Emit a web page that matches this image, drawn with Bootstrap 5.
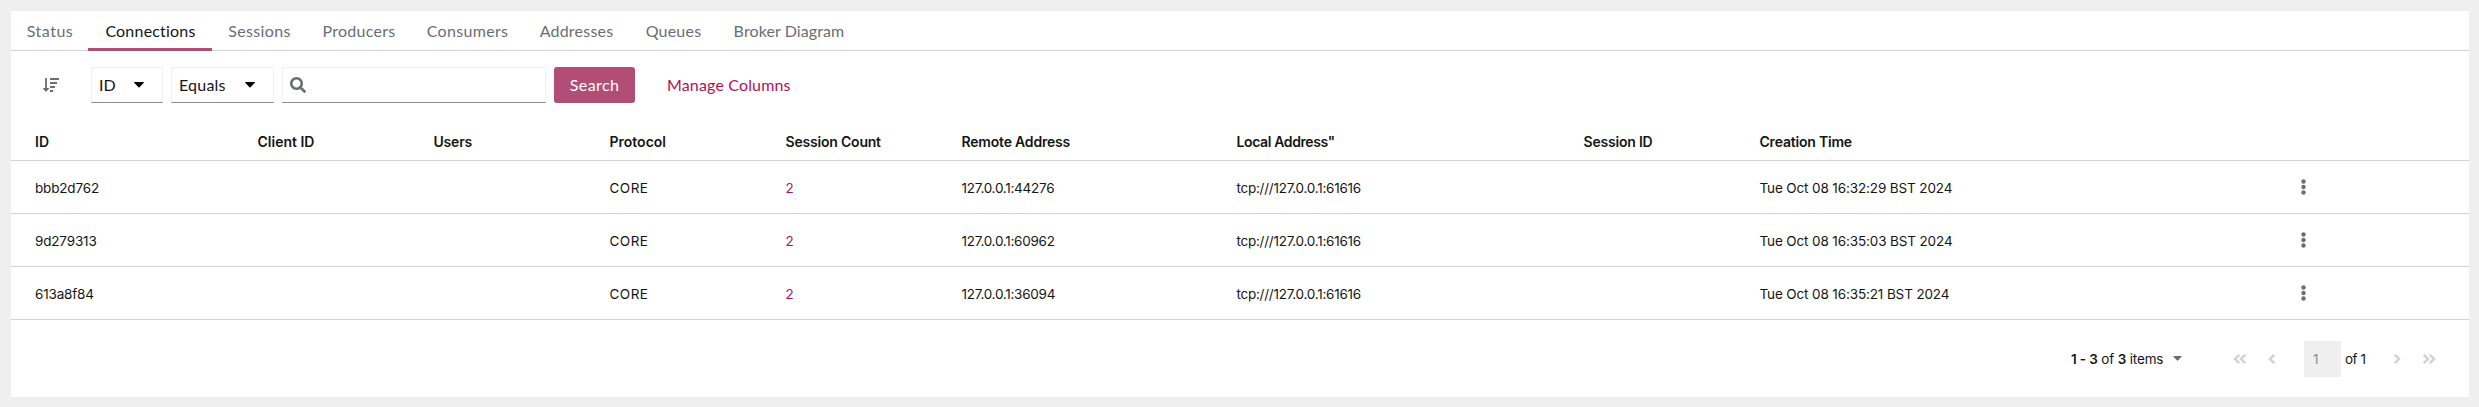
<!DOCTYPE html>
<html lang="en">
<head>
<meta charset="utf-8">
<title>Connections</title>
<link rel="stylesheet" href="https://cdn.jsdelivr.net/npm/bootstrap@5.3.0/dist/css/bootstrap.min.css">
<style>
body{background:#efefef;color:#151515;font-family:Lato,sans-serif;font-size:16px;line-height:24px;overflow:hidden}
.panel{margin:11px 10px 0 11px;height:386px;background:#fff}
.tabs{height:40px;border-bottom:1px solid #d2d2d2;flex-wrap:nowrap}
.tabs .nav-link{height:40px;padding:8px 0 0 1px;line-height:24px;color:#6a6e73;text-align:center;white-space:nowrap;letter-spacing:var(--ls);border-bottom:3px solid transparent}
.tabs .nav-link.active{color:#151515;border-bottom-color:#b24e76}
.t1{width:77px;--ls:.5px}.t2{width:124px;--ls:.2px}.t3{width:94px;--ls:.35px}.t4{width:105px;--ls:.25px}
.t5{width:112px;--ls:.32px}.t6{width:106px;--ls:.22px}.t7{width:88px;--ls:.22px}.t8{width:143px;--ls:.1px}
.toolbar{height:52px;padding-top:16px}
.sort{width:80px;padding-left:32px;height:36px}
.field{height:36px;border:1px solid #f0f0f0;border-bottom-color:#8a8d90;background:#fff;padding:0 8px 0 7px}
.f-id{width:72px}.f-eq{width:103px;letter-spacing:.22px}.f-q{width:264px}
.field .caret{margin-right:10px}
.btn-search{width:81px;height:36px;padding:0;background:#b24e76;color:#fff;border:0;border-radius:3px;letter-spacing:.4px;font-size:16px}
.link-main{color:#b0115c;text-decoration:none;letter-spacing:.15px;margin-left:32px}
.grid{width:2458px;table-layout:fixed;border-collapse:separate;border-spacing:0;margin:20px 0 0;color:#151515;font:13.5px/20px Inter,sans-serif}
.grid>:not(caption)>*>*{padding:2px 0 0 8.5px;height:53px;border-bottom:1px solid #d2d2d2;vertical-align:middle;white-space:nowrap;box-shadow:none;background:none;color:inherit}
.grid>thead>tr>th{height:38px;font-size:14px;font-weight:600;letter-spacing:-.2px;padding-top:1px}
.grid>*>tr>:first-child{padding-left:24px}
.grid>tbody>tr>:last-child{padding:0 0 0 9.500px}
.grid .x0{letter-spacing:0}.grid>thead>tr>.x4{letter-spacing:-.38px}
.c-id{letter-spacing:-.17px}.c-core{letter-spacing:.5px}.c-ip{letter-spacing:-.26px}.c-time{letter-spacing:-.13px}
.grid>tbody>tr>.c-count{color:#b0115c}
.pager{height:77px;font:13.5px/20px Inter,sans-serif;padding-left:2060px}
.pager .total{width:91px;letter-spacing:-.16px;white-space:nowrap}
.pager b{font-weight:600}
.page-box{width:37px;height:36px;padding-left:9px;margin-left:28px;background:#efefef;color:#8a8d90}
.page-total{width:21px;margin-left:4px;white-space:nowrap;letter-spacing:-.5px}
.gap-drop{margin-left:11px}.gap-first{margin-left:51px}.gap-step{margin-left:21px}.gap-next{margin-left:27px}
svg{display:block;flex:none}
</style>
</head>
<body>
<main class="panel">
<ul class="nav tabs">
<li class="t1"><a class="nav-link">Status</a></li><li class="t2"><a class="nav-link active">Connections</a></li><li class="t3"><a class="nav-link">Sessions</a></li><li class="t4"><a class="nav-link">Producers</a></li><li class="t5"><a class="nav-link">Consumers</a></li><li class="t6"><a class="nav-link">Addresses</a></li><li class="t7"><a class="nav-link">Queues</a></li><li class="t8"><a class="nav-link">Broker Diagram</a></li>
</ul>
<div class="toolbar d-flex">
<div class="sort d-flex align-items-center"><svg width="16" height="16" viewBox="0 0 16 16" fill="#6a6e73"><path d="M2.1 1h1.8v10h1.7c.5 0 .6.4.3.7l-2.500 2.900a.5.5 0 0 1-.8 0L.1 11.700c-.3-.3-.1-.7.3-.7h1.700zM7 1h9v2H7zM7 5h7v2H7zM7 9h5v2H7zM7 13h3v2H7z"/></svg></div>
<div class="field f-id d-flex align-items-center justify-content-between">ID<svg class="caret" width="10" height="6" viewBox="0 0 10 6"><path d="M.6 0h8.800c.6 0 .7.500.4.8L5.500 5.300a.7.7 0 0 1-1 0L.2.8C-.1.500 0 0 .6 0z"/></svg></div>
<div class="field f-eq ms-2 d-flex align-items-center justify-content-between">Equals<svg class="caret" width="10" height="6" viewBox="0 0 10 6"><path d="M.6 0h8.800c.6 0 .7.500.4.8L5.500 5.300a.7.7 0 0 1-1 0L.2.8C-.1.500 0 0 .6 0z"/></svg></div>
<div class="field f-q ms-2 d-flex align-items-center"><svg width="16" height="16" viewBox="0 0 512 512" fill="#6a6e73"><path d="M505 442.700L405.300 343c-4.500-4.500-10.600-7-17-7H372c27.600-35.300 44-79.700 44-128C416 93.100 322.900 0 208 0S0 93.100 0 208s93.100 208 208 208c48.300 0 92.700-16.400 128-44v16.300c0 6.400 2.500 12.500 7 17l99.700 99.700c9.400 9.400 24.600 9.400 33.900 0l28.300-28.300c9.400-9.400 9.400-24.600.1-34zM208 336c-70.700 0-128-57.200-128-128 0-70.700 57.200-128 128-128 70.700 0 128 57.200 128 128 0 70.700-57.200 128-128 128z"/></svg></div>
<button class="btn btn-search ms-2">Search</button>
<a class="link-main d-flex align-items-center">Manage Columns</a>
</div>
<table class="table grid">
<colgroup><col style="width:238px"><col style="width:176px"><col style="width:176px"><col style="width:176px"><col style="width:176px"><col style="width:275px"><col style="width:347px"><col style="width:176px"><col style="width:540px"><col></colgroup>
<thead><tr><th class="x0">ID</th><th class="x0">Client ID</th><th>Users</th><th class="x0">Protocol</th><th>Session Count</th><th>Remote Address</th><th class="x4">Local Address"</th><th>Session ID</th><th>Creation Time</th><th></th></tr></thead>
<tbody>
<tr><td class="c-id">bbb2d762</td><td></td><td></td><td class="c-core">CORE</td><td class="c-count">2</td><td class="c-ip">127.0.0.1:44276</td><td class="c-ip">tcp:///127.0.0.1:61616</td><td></td><td class="c-time">Tue Oct 08 16:32:29 BST 2024</td><td><svg width="5" height="16" viewBox="0 0 5 16" fill="#6a6e73"><circle cx="2.500" cy="2.500" r="2.200"/><circle cx="2.500" cy="8" r="2.200"/><circle cx="2.500" cy="13.500" r="2.200"/></svg></td></tr>
<tr><td class="c-id">9d279313</td><td></td><td></td><td class="c-core">CORE</td><td class="c-count">2</td><td class="c-ip">127.0.0.1:60962</td><td class="c-ip">tcp:///127.0.0.1:61616</td><td></td><td class="c-time">Tue Oct 08 16:35:03 BST 2024</td><td><svg width="5" height="16" viewBox="0 0 5 16" fill="#6a6e73"><circle cx="2.500" cy="2.500" r="2.200"/><circle cx="2.500" cy="8" r="2.200"/><circle cx="2.500" cy="13.500" r="2.200"/></svg></td></tr>
<tr><td class="c-id">613a8f84</td><td></td><td></td><td class="c-core">CORE</td><td class="c-count">2</td><td class="c-ip">127.0.0.1:36094</td><td class="c-ip">tcp:///127.0.0.1:61616</td><td></td><td class="c-time">Tue Oct 08 16:35:21 BST 2024</td><td><svg width="5" height="16" viewBox="0 0 5 16" fill="#6a6e73"><circle cx="2.500" cy="2.500" r="2.200"/><circle cx="2.500" cy="8" r="2.200"/><circle cx="2.500" cy="13.500" r="2.200"/></svg></td></tr>
</tbody></table>
<div class="pager d-flex align-items-center">
<span class="total"><b>1 - 3</b> of <b>3</b> items</span>
<svg class="gap-drop" width="9" height="5" viewBox="0 0 10 6" fill="#6a6e73"><path d="M.6 0h8.800c.6 0 .7.500.4.8L5.500 5.300a.7.7 0 0 1-1 0L.2.8C-.1.500 0 0 .6 0z"/></svg>
<svg class="gap-first" width="14" height="10" viewBox="0 0 14 10" fill="none" stroke="#d2d2d2" stroke-width="2.400"><path d="M6.300.8L2 5l4.300 4.200M12.300.8L8 5l4.300 4.200"/></svg>
<svg class="gap-step" width="8" height="10" viewBox="0 0 8 10" fill="none" stroke="#d2d2d2" stroke-width="2.400"><path d="M6.300.8L2 5l4.300 4.200"/></svg>
<span class="page-box d-flex align-items-center">1</span>
<span class="page-total">of 1</span>
<svg class="gap-next" width="8" height="10" viewBox="0 0 8 10" fill="none" stroke="#d2d2d2" stroke-width="2.400"><path d="M1.700.8L6 5 1.700 9.200"/></svg>
<svg class="gap-step" width="14" height="10" viewBox="0 0 14 10" fill="none" stroke="#d2d2d2" stroke-width="2.400"><path d="M1.700.8L6 5 1.700 9.200M7.700.8L12 5 7.700 9.200"/></svg>
</div>
</main>
<script src="https://cdn.jsdelivr.net/npm/bootstrap@5.3.0/dist/js/bootstrap.bundle.min.js"></script>
</body>
</html>
